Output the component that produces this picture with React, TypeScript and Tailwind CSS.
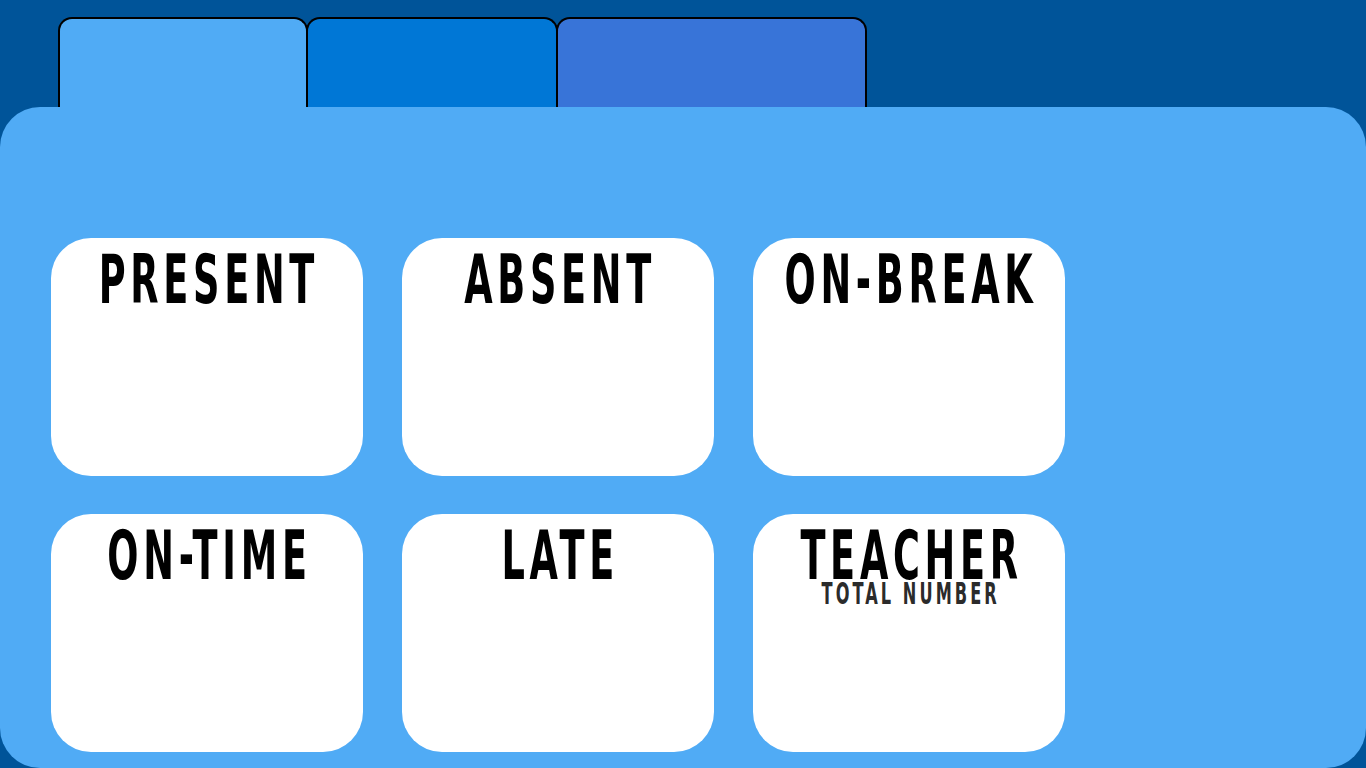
import React from 'react';

type CardProps = { title: string; sub?: string };

const StatCard = ({ title, sub }: CardProps) => {
  return (
    <div className="flex h-[238px] w-[312px] flex-col items-center rounded-[40px] bg-white pt-[15px]">
      <div className="flex w-full justify-center whitespace-nowrap">
        <span className="inline-block scale-x-[0.6] pl-[0.115em] text-[68px] font-bold leading-[0.8] tracking-[0.115em] text-black">
          {title}
        </span>
      </div>
      {sub && (
        <div className="flex w-full justify-center whitespace-nowrap">
          <span className="inline-block scale-x-[0.6] pl-[0.17em] text-[30px] font-bold leading-[0.7] tracking-[0.17em] text-[#2b2b2b]">
            {sub}
          </span>
        </div>
      )}
    </div>
  );
};

const App = () => {
  return (
    <div
      className="flex h-[768px] w-[1366px] flex-col overflow-hidden bg-[#005499]"
      style={{ fontFamily: '"DejaVu Sans Condensed", "DejaVu Sans", sans-serif' }}
    >
      {/* tabs */}
      <div className="flex h-[107px] items-end pl-[58px]">
        <div className="h-[90px] w-[250px] rounded-t-[14px] border-2 border-b-0 border-black bg-[#50abf5]" />
        <div className="-ml-[2px] h-[90px] w-[252px] rounded-t-[14px] border-2 border-b-0 border-black bg-[#0077d6]" />
        <div className="-ml-[2px] h-[90px] w-[311px] rounded-t-[14px] border-2 border-b-0 border-black bg-[#3874d8]" />
      </div>

      {/* panel */}
      <div className="flex-1 rounded-[40px] bg-[#50abf5] pl-[51px] pt-[131px]">
        <div className="grid w-fit grid-cols-[312px_312px_312px] gap-x-[39px] gap-y-[38px]">
          <StatCard title="PRESENT" />
          <StatCard title="ABSENT" />
          <StatCard title="ON-BREAK" />
          <StatCard title="ON-TIME" />
          <StatCard title="LATE" />
          <StatCard title="TEACHER" sub="TOTAL NUMBER" />
        </div>
      </div>
    </div>
  );
};

export default App;
